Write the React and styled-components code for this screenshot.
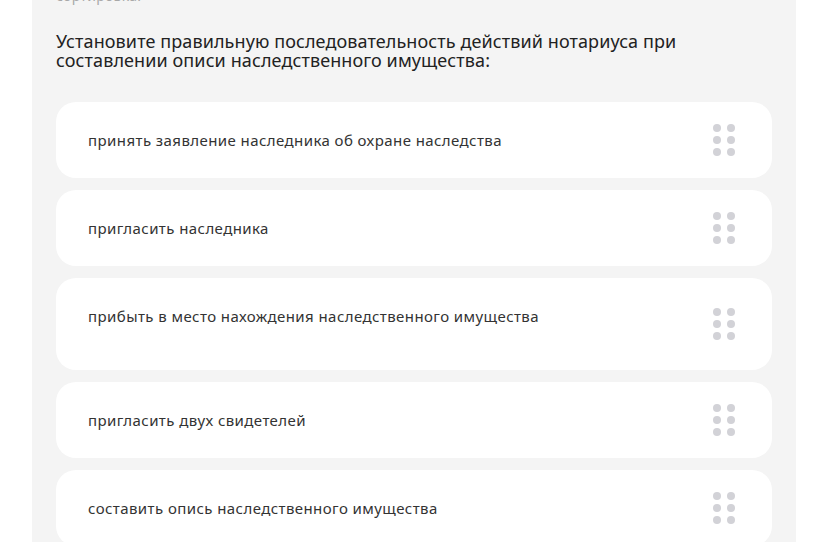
import React from "react";
import styled, { createGlobalStyle } from "styled-components";

const Global = createGlobalStyle`
  html, body { margin: 0; padding: 0; background: #ffffff; }
  body { font-family: "Noto Sans", "Open Sans", sans-serif; color: #2b2b2b; overflow: hidden; }
`;

const Page = styled.div`
  padding: 0 32px;
  margin-top: -12px;
`;

const Panel = styled.section`
  background: #f4f4f4;
  padding: 0 24px 40px;
  display: flex;
  flex-direction: column;
`;

const Hint = styled.div`
  font-size: 14px;
  line-height: 16px;
  color: #a8a8a8;
  letter-spacing: 0.3px;
`;

const Title = styled.h2`
  margin: 28px 0 32px;
  font-size: 18px;
  line-height: 19px;
  font-weight: 400;
  color: #222222;
  letter-spacing: 0.1px;
`;

const List = styled.div`
  display: flex;
  flex-direction: column;
  gap: 12px;
`;

const Card = styled.div`
  background: #ffffff;
  border-radius: 20px;
  display: flex;
  align-items: flex-start;
  justify-content: space-between;
  padding: 28px 36px 28px 32px;
  min-height: ${(p) => (p.$tall ? 92 : 76)}px;
  box-sizing: border-box;
  position: relative;
`;

const Text = styled.span`
  font-size: 15px;
  line-height: 20px;
  color: #333333;
  letter-spacing: 0.42px;
`;

const Handle = styled.div`
  position: absolute;
  right: 37px;
  top: 50%;
  transform: translateY(-50%);
  display: grid;
  grid-template-columns: repeat(2, 8px);
  grid-auto-rows: 8px;
  column-gap: 6px;
  row-gap: 4px;
`;

const Dot = styled.span`
  width: 8px;
  height: 8px;
  border-radius: 50%;
  background: #d2d2d7;
`;

const items = [
  { text: "принять заявление наследника об охране наследства" },
  { text: "пригласить наследника" },
  { text: "прибыть в место нахождения наследственного имущества", tall: true },
  { text: "пригласить двух свидетелей" },
  { text: "составить опись наследственного имущества" },
];

export default function App() {
  return (
    <>
      <Global />
      <Page>
        <Panel>
          <Hint>сортировка.</Hint>
          <Title>
            Установите правильную последовательность действий нотариуса при
            <br />
            составлении описи наследственного имущества:
          </Title>
          <List>
            {items.map((it, i) => (
              <Card key={i} $tall={it.tall}>
                <Text>{it.text}</Text>
                <Handle>
                  {Array.from({ length: 6 }).map((_, j) => (
                    <Dot key={j} />
                  ))}
                </Handle>
              </Card>
            ))}
          </List>
        </Panel>
      </Page>
    </>
  );
}
